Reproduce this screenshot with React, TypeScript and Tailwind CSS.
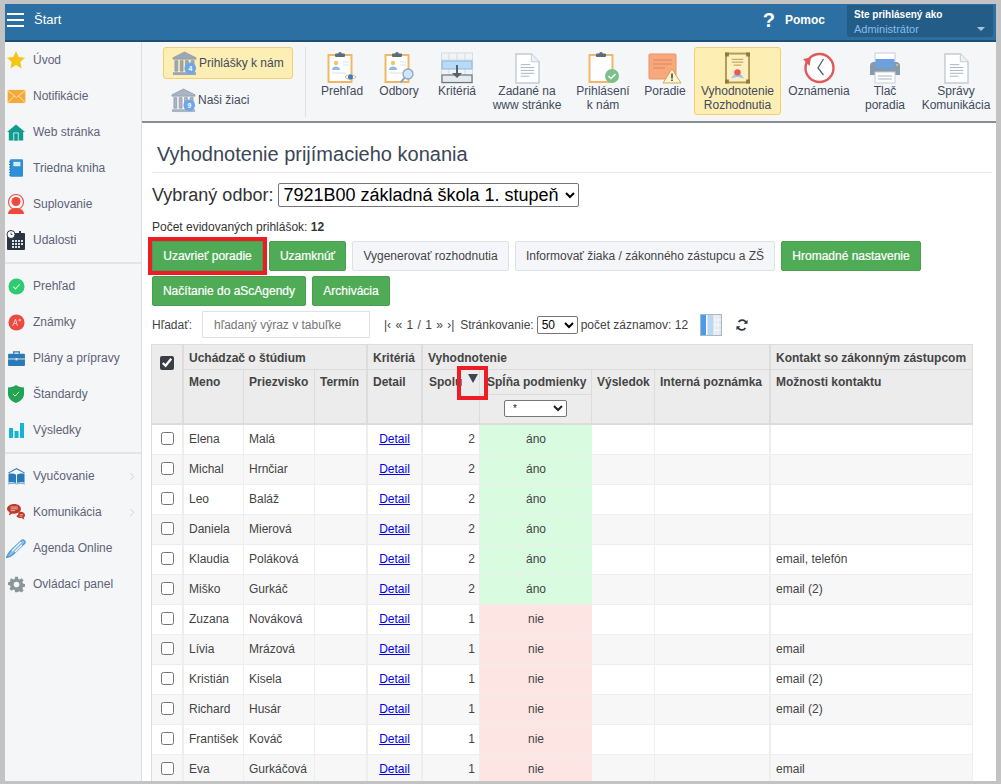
import type { ReactNode } from "react";

const FONT = "[font-family:'Liberation_Sans',Arial,sans-serif]";

type SvgProps = { className?: string };

/* sidebar icons */
function StarIcon() {
  return (
    <svg viewBox="0 0 20 20" className="h-5 w-5">
      <path d="M10 1l2.7 6 6.4.7-4.8 4.3 1.4 6.4L10 15.1l-5.7 3.3 1.4-6.4L.9 7.7 7.3 7z" fill="#f5c518" />
    </svg>
  );
}
function MailIcon() {
  return (
    <svg viewBox="0 0 20 16" className="h-[15px] w-[19px]">
      <rect width="19" height="14" x=".5" y="1" fill="#f6a93b" />
      <path d="M.5 1.5L10 9l9.5-7.5M.5 15l7-7.5M19.5 15l-7-7.5" fill="none" stroke="#fde3b5" strokeWidth="1" />
    </svg>
  );
}
function HouseIcon() {
  return (
    <svg viewBox="0 0 20 18" className="h-[17px] w-[18px]">
      <path d="M10 0l10 8.5h-2V18H2V8.5H0z" fill="#0f9b8e" />
      <rect x="7" y="9" width="6" height="9" fill="#d8f0ed" />
      <rect x="8" y="10" width="4" height="8" fill="#0f9b8e" />
    </svg>
  );
}
function NotebookIcon() {
  return (
    <svg viewBox="0 0 16 20" className="h-[18px] w-[14px]">
      <rect x="1" y="0" width="15" height="20" rx="1.5" fill="#2d8fd5" />
      <rect x="5" y="3" width="8" height="5" fill="#d5ecfb" />
      <path d="M0 3h2M0 6h2M0 9h2M0 12h2M0 15h2M0 18h2" stroke="#1d6ba5" strokeWidth="1" />
    </svg>
  );
}
function PersonIcon() {
  return (
    <svg viewBox="0 0 20 20" className="h-5 w-5">
      <circle cx="10" cy="8" r="7.5" fill="none" stroke="#ee5a4c" strokeWidth="1.2" />
      <circle cx="10" cy="7.5" r="4.5" fill="#ee4b3e" />
      <path d="M2 20c0-4 4-6 8-6s8 2 8 6z" fill="#ee4b3e" />
    </svg>
  );
}
function CalendarIcon() {
  return (
    <svg viewBox="0 0 20 20" className="h-5 w-5">
      <rect x="1" y="3" width="18" height="17" rx="1" fill="#2b3442" />
      <rect x="13" y="1" width="2" height="4" fill="#2b3442" />
      <circle cx="5" cy="4.5" r="4" fill="#fff" stroke="#2b3442" />
      <path d="M5 2.5v2h1.5" stroke="#2b3442" fill="none" strokeWidth=".8" />
      <path d="M6 10h2v2H6zM9 10h2v2H9zM12 10h2v2h-2zM15 10h2v2h-2zM6 13h2v2H6zM9 13h2v2H9zM12 13h2v2h-2zM15 13h2v2h-2zM6 16h2v2H6zM9 16h2v2H9zM12 16h2v2h-2z" fill="#dfe3e8" />
    </svg>
  );
}
function CheckCircleIcon() {
  return (
    <svg viewBox="0 0 18 18" className="h-[17px] w-[17px]">
      <circle cx="9" cy="9" r="8.5" fill="#2ecc71" />
      <path d="M5.5 9.2l2.4 2.4 4.5-5" fill="none" stroke="#d7f7e4" strokeWidth="1.1" />
    </svg>
  );
}
function GradeIcon() {
  return (
    <svg viewBox="0 0 18 18" className="h-[17px] w-[17px]">
      <circle cx="9" cy="9" r="8.5" fill="#ec4a40" />
      <path d="M5 12.5L8 5.5l2 7M6.2 10h3M11 6.5h3M12.5 5v3" fill="none" stroke="#fbd3cf" strokeWidth="1" />
    </svg>
  );
}
function BriefcaseIcon() {
  return (
    <svg viewBox="0 0 18 16" className="h-[15px] w-[17px]">
      <path d="M6 3V1h6v2" fill="none" stroke="#2a7ab8" strokeWidth="1.4" />
      <rect y="3" width="18" height="13" rx="1" fill="#2a7ab8" />
      <path d="M0 8.5h18" stroke="#d9ebf7" strokeWidth="1" />
      <rect x="8" y="7.5" width="2" height="2.5" fill="#d9ebf7" />
    </svg>
  );
}
function ShieldIcon() {
  return (
    <svg viewBox="0 0 16 18" className="h-[18px] w-[16px]">
      <path d="M8 0c2 1.6 4.5 2.4 8 2.5V9c0 4-3.2 7.3-8 9-4.8-1.7-8-5-8-9V2.5C3.500 2.400 6 1.600 8 0z" fill="#23a455" />
      <path d="M4.800 8.800l2.300 2.300 4-4.300" fill="none" stroke="#d6f3e0" strokeWidth="1" />
    </svg>
  );
}
function BarsIcon() {
  return (
    <svg viewBox="0 0 15 15" className="h-[15px] w-[15px]">
      <path d="M0 5h4v10H0zM5.500 8h4v7h-4zM11 0h4v15h-4z" fill="#12b5d6" />
    </svg>
  );
}
function OpenBookIcon() {
  return (
    <svg viewBox="0 0 20 18" className="h-[17px] w-[19px]">
      <path d="M10 0l9 5-1 .6L10 1.400 2 5.600 1 5z" fill="#2a7ab8" />
      <path d="M1.500 6C4 5.500 7.500 5.500 9.500 7v9C7.500 15 4 15 1.500 15.500zM18.500 6C16 5.500 12.500 5.500 10.500 7v9c2-1 5.500-1 8-.5z" fill="#2a7ab8" />
      <path d="M1 17c3-1 6-1 9 0 3-1 6-1 9 0" fill="none" stroke="#5aa5d8" strokeWidth="1" />
    </svg>
  );
}
function ChatIcon() {
  return (
    <svg viewBox="0 0 20 18" className="h-[18px] w-[18px]">
      <path d="M8 0c4.500 0 7.500 2.500 7.500 5.500S12.500 11 8 11c-.8 0-1.500 0-2-.2L2 13l1-3.500C1.200 8.500 0 7 0 5.500 0 2.500 3.500 0 8 0z" fill="#c0392b" />
      <path d="M4 3.500h8M4 5.500h8M4 7.500h5" stroke="#f6d5d1" strokeWidth=".9" />
      <path d="M13 9c4-.8 7 .6 7 3.500 0 1.300-.7 2.200-1.500 2.700l.8 2.300-3-1.800c-2.500.2-5-.5-6-2.200 1.500-.6 2.300-1.700 2.700-4.500z" fill="#c0392b" />
      <path d="M14 12h4M14 13.800h3" stroke="#f6d5d1" strokeWidth=".8" />
    </svg>
  );
}
function PenIcon() {
  return (
    <svg viewBox="0 0 20 20" className="h-5 w-5">
      <path d="M.5 19.500c3-.8 5.500-2 7-3.500L18.500 5.500c1.800-1.800-1-4.800-3-3L5 12.500C3 14.500 1.500 17 .5 19.500z" fill="#8dbfe8" stroke="#4f97d6" strokeWidth="1.300" />
      <path d="M6 13l9-9M9 14l7-7" stroke="#f5f6f8" strokeWidth="1.200" />
    </svg>
  );
}
function GearIcon() {
  return (
    <svg viewBox="0 0 24 24" className="h-[17px] w-[17px]">
      <path
        d="M10 1h4l.6 3.100 2 .8L19.200 3.200l2.800 2.800-1.700 2.600.8 2 3 .6v4l-3 .6-.8 2 1.700 2.600-2.800 2.800-2.600-1.700-2 .8L14 23h-4l-.6-3.100-2-.8-2.600 1.700L2 18l1.700-2.600-.8-2-3-.6v-4l3-.6.8-2L2 6l2.800-2.800 2.600 1.700 2-.8zM12 8a4 4 0 100 8 4 4 0 000-8z"
        fill="#8b9698"
        fillRule="evenodd"
      />
    </svg>
  );
}

/* toolbar icons */
function Clipboard({ children }: { children?: ReactNode }) {
  return (
    <svg viewBox="0 0 34 32" className="h-8 w-[34px]">
      <rect x="3.500" y="3" width="23" height="27" fill="#fff" stroke="#f0b866" strokeWidth="2" />
      <rect x="10" y="1.500" width="10" height="3.500" rx="1" fill="#5d6b7d" />
      <circle cx="15" cy="1.800" r="1.800" fill="#5d6b7d" />
      {children}
    </svg>
  );
}
function PersonLines() {
  return (
    <>
      <circle cx="11" cy="11" r="2.200" fill="#f4c36b" />
      <path d="M7 18c0-2.500 2-3.500 4-3.500s4 1 4 3.500z" fill="#8fbce6" />
      <path d="M18 10h6M18 13h6M7 21h14" stroke="#dbe2ea" strokeWidth="1" />
    </>
  );
}
function DocIcon() {
  return (
    <svg viewBox="0 0 26 32" className="h-[31px] w-[25px]">
      <path d="M1 1h16l8 8v22H1z" fill="#fff" stroke="#c2cbd6" strokeWidth="1.500" />
      <path d="M17 1v8h8" fill="#eef1f4" stroke="#c2cbd6" strokeWidth="1" />
      <path d="M6 12h10M6 15h14M6 18h14M6 21h14M6 24h9" stroke="#a9b3bf" strokeWidth="1" />
    </svg>
  );
}
function KriteriaIcon() {
  return (
    <svg viewBox="0 0 32 32" className="h-8 w-8">
      <rect x=".5" y="1" width="31" height="30" fill="#f1f4f7" stroke="#d5dce3" />
      <path d="M8 1v30M16 1v30M24 1v30M1 8h30" stroke="#d5dce3" strokeWidth="1" />
      <rect x="1" y="9" width="30" height="8" fill="#b8dcf8" stroke="#8fb6d3" />
      <rect x="1" y="23" width="30" height="7.500" fill="#e6eaee" stroke="#69747f" strokeWidth="1.200" />
      <path d="M16 13v12" stroke="#56616c" strokeWidth="2" />
      <path d="M11 21h10l-5 5z" fill="#56616c" />
    </svg>
  );
}
function PoradieIcon() {
  return (
    <svg viewBox="0 0 34 32" className="h-8 w-[34px]">
      <rect x="1" y="2" width="27" height="25" rx="1" fill="#f7a97d" stroke="#e59466" />
      <path d="M5 8h19M5 12h19M5 16h12" stroke="#d98458" strokeWidth="1" />
      <path d="M24 17l9 14H15z" fill="#fdf3cf" stroke="#c9ad5a" />
      <path d="M24 21.500v5M24 27.500v1.500" stroke="#333" strokeWidth="1.400" />
    </svg>
  );
}
function CertIcon() {
  return (
    <svg viewBox="0 0 26 32" className="h-8 w-[25px]">
      <rect x="1" y="1" width="24" height="30" fill="#fdf0c0" stroke="#b59a55" strokeWidth="2" />
      <path d="M0 0h4v4H0zM22 0h4v4h-4zM0 28h4v4H0zM22 28h4v4h-4z" fill="#8f7a3f" />
      <path d="M7 7h12M7 10h12M9 13h8" stroke="#c9ab5d" strokeWidth="1.300" />
      <path d="M6 27l5-6h4l5 6-7-2z" fill="#9cc4ec" />
      <circle cx="13" cy="20.500" r="3.300" fill="#ea5a55" />
    </svg>
  );
}
function ClockIcon() {
  return (
    <svg viewBox="0 0 32 32" className="h-8 w-8">
      <circle cx="16.500" cy="16" r="14" fill="#fff" stroke="#e1595a" strokeWidth="2.400" />
      <path d="M20.500 7l-5.500 9 5.500 7" fill="none" stroke="#56616c" strokeWidth="1.300" />
      <path d="M0 7l8-1.500L6.500 14z" fill="#e1595a" />
    </svg>
  );
}
function PrinterIcon() {
  return (
    <svg viewBox="0 0 32 32" className="h-8 w-8">
      <rect x="6" y="1" width="20" height="10" fill="#fff" stroke="#c5ced7" />
      <path d="M1 14c0-2 1-4 4-4h22c3 0 4 2 4 4v9H1z" fill="#8799ab" />
      <rect x="6.500" y="7" width="19" height="9" fill="#6ba1df" />
      <rect x="6" y="20" width="20" height="11" fill="#fff" stroke="#c5ced7" />
      <path d="M9 24h14M9 27h14" stroke="#a9b3bf" strokeWidth="1" />
      <circle cx="28" cy="13" r="1" fill="#f3c969" />
    </svg>
  );
}
function BankIcon({ count, dim }: { count: string; dim?: boolean }) {
  const c = dim ? "#aab5c4" : "#9aa7b8";
  return (
    <svg viewBox="0 0 26 26" className="h-[25px] w-[25px]">
      <path d="M13 1l12 6v1.500H1V7z" fill={c} stroke="#7f8da0" strokeWidth=".6" />
      <path d="M3 10h3v11H3zM8.500 10h3v11h-3zM14 10h3v11h-3zM20 10h3v11h-3z" fill={c} stroke="#7f8da0" strokeWidth=".6" />
      <rect x="1" y="22" width="24" height="3" fill={c} />
      <circle cx="19" cy="18" r="6" fill="#6ea6e8" />
      <text x="19" y="20.500" textAnchor="middle" fontSize="7" fontWeight="700" fill="#fff" fontFamily="Liberation Sans">
        {count}
      </text>
    </svg>
  );
}
function ColumnsIcon({ className }: SvgProps) {
  return (
    <svg viewBox="0 0 22 22" className={className}>
      <rect x=".5" y=".5" width="21" height="21" fill="#dfe6ee" stroke="#a9b8c8" />
      <rect x="1" y="1" width="5" height="20" fill="#4b9be8" />
      <rect x="6" y="1" width="1" height="20" fill="#fff" />
      <rect x="8" y="1" width="5" height="20" fill="#b8d8f5" />
      <path d="M15 1v20M18 1v20M14 6h7M14 11h7M14 16h7" stroke="#fff" strokeWidth=".8" />
    </svg>
  );
}
function RefreshIcon() {
  return (
    <svg viewBox="0 0 14 14" className="h-3 w-3">
      <path d="M12 5A5 5 0 003 3.500M2 9a5 5 0 009 1.500" fill="none" stroke="#33383f" strokeWidth="2" />
      <path d="M9 5.500h4.500V1zM5 8.500H.5V13z" fill="#33383f" />
    </svg>
  );
}

const sideGroups: { icon: ReactNode; label: string; more?: boolean }[][] = [
  [
    { icon: <StarIcon />, label: "Úvod" },
    { icon: <MailIcon />, label: "Notifikácie" },
    { icon: <HouseIcon />, label: "Web stránka" },
    { icon: <NotebookIcon />, label: "Triedna kniha" },
    { icon: <PersonIcon />, label: "Suplovanie" },
    { icon: <CalendarIcon />, label: "Udalosti" },
  ],
  [
    { icon: <CheckCircleIcon />, label: "Prehľad" },
    { icon: <GradeIcon />, label: "Známky" },
    { icon: <BriefcaseIcon />, label: "Plány a prípravy" },
    { icon: <ShieldIcon />, label: "Štandardy" },
    { icon: <BarsIcon />, label: "Výsledky" },
  ],
  [
    { icon: <OpenBookIcon />, label: "Vyučovanie", more: true },
    { icon: <ChatIcon />, label: "Komunikácia", more: true },
    { icon: <PenIcon />, label: "Agenda Online" },
    { icon: <GearIcon />, label: "Ovládací panel" },
  ],
];

function Sidebar() {
  return (
    <aside className="flex w-[137px] shrink-0 flex-col border-r border-[#dcdfe3] bg-[#f5f6f8]">
      {sideGroups.map((group, i) => (
        <div key={i} className={i > 0 ? "mt-1 border-t-2 border-[#e2e4e7] pt-1" : ""}>
          {group.map((item) => (
            <div key={item.label} className="flex h-9 items-center text-xs text-[#5e6277]">
              <span className="mr-[6px] flex w-[22px] shrink-0 justify-center">{item.icon}</span>
              <span>{item.label}</span>
              {item.more && (
                <svg viewBox="0 0 6 10" className="ml-auto mr-[6px] h-[9px] w-[6px]">
                  <path d="M1 1l4 4-4 4" fill="none" stroke="#c6cbd0" strokeWidth="1" />
                </svg>
              )}
            </div>
          ))}
        </div>
      ))}
    </aside>
  );
}

function ToolItem({ icon, lines, w, active }: { icon: ReactNode; lines: string[]; w: string; active?: boolean }) {
  return (
    <div
      className={`flex h-[68px] shrink-0 flex-col items-center rounded-[3px] border pt-1 text-center text-xs leading-[14px] text-[#434a5c] ${w} ${
        active ? "border-[#f5cf6b] bg-[#fdeeb3]" : "border-transparent"
      }`}
    >
      <span className="flex h-8 items-center">{icon}</span>
      <span>
        {lines.map((l) => (
          <span key={l} className="block whitespace-nowrap">
            {l}
          </span>
        ))}
      </span>
    </div>
  );
}

function Toolbar() {
  return (
    <div className="flex h-[81px] shrink-0 items-start border-b-2 border-[#8a8d92] bg-[#f5f6f8] pt-[5px]">
      <div className="ml-[21px] flex w-[130px] shrink-0 flex-col gap-[5px]">
        <div className="flex h-[32px] items-center gap-[2px] rounded-[3px] border border-[#f5cf6b] bg-[#fdeeb3] pl-2 text-xs text-[#434a5c]">
          <BankIcon count="4" />
          <span className="whitespace-nowrap">Prihlášky k nám</span>
        </div>
        <div className="flex h-[32px] items-center gap-[2px] pl-2 text-xs text-[#434a5c]">
          <BankIcon count="9" dim />
          <span>Naši žiaci</span>
        </div>
      </div>
      <div className="ml-3 mr-[7px] h-[70px] w-px shrink-0 bg-[#dfe2e6]" />
      <ToolItem w="w-[58px]" lines={["Prehľad"]} icon={<Clipboard><PersonLines /><path d="M20 25c2-3 8-3 11 0-3 3-9 3-11 0z" fill="#fff" stroke="#c9b98a" /><circle cx="25.500" cy="25" r="2.500" fill="#3b7bbf" /></Clipboard>} />
      <ToolItem w="w-[56px]" lines={["Odbory"]} icon={<Clipboard><PersonLines /><circle cx="26" cy="22" r="5" fill="#cfe6fa" stroke="#8da5bd" strokeWidth="1.300" /><path d="M22.500 26l-4 4.500" stroke="#8da5bd" strokeWidth="2" /></Clipboard>} />
      <ToolItem w="w-[60px]" lines={["Kritériá"]} icon={<KriteriaIcon />} />
      <ToolItem w="w-[80px]" lines={["Zadané na", "www stránke"]} icon={<DocIcon />} />
      <ToolItem w="w-[72px]" lines={["Prihlásení", "k nám"]} icon={<Clipboard><circle cx="26" cy="24" r="7" fill="#7cc08a" /><path d="M22.500 24l2.500 2.500 4.500-4.500" fill="none" stroke="#fff" strokeWidth="1.500" /></Clipboard>} />
      <ToolItem w="w-[52px]" lines={["Poradie"]} icon={<PoradieIcon />} />
      <div className="w-[3px] shrink-0" />
      <ToolItem w="w-[87px]" active lines={["Vyhodnotenie", "Rozhodnutia"]} icon={<CertIcon />} />
      <ToolItem w="w-[76px]" lines={["Oznámenia"]} icon={<ClockIcon />} />
      <ToolItem w="w-[56px]" lines={["Tlač", "poradia"]} icon={<PrinterIcon />} />
      <ToolItem w="w-[83px] pl-[3px]" lines={["Správy", "Komunikácia"]} icon={<DocIcon />} />
    </div>
  );
}

function Btn({ children, green, className = "" }: { children: ReactNode; green?: boolean; className?: string }) {
  return (
    <button
      type="button"
      className={`h-[30px] whitespace-nowrap border px-0 text-xs ${
        green
          ? "border-[#4a9e50] bg-[#4fab55] text-white [-webkit-text-stroke:0.2px_white]"
          : "border-[#dfe1e6] bg-[#f5f6fa] text-[#444]"
      } ${className}`}
    >
      {children}
    </button>
  );
}

const rows: [string, string, number, string][] = [
  ["Elena", "Malá", 2, ""],
  ["Michal", "Hrnčiar", 2, ""],
  ["Leo", "Baláž", 2, ""],
  ["Daniela", "Mierová", 2, ""],
  ["Klaudia", "Poláková", 2, "email, telefón"],
  ["Miško", "Gurkáč", 2, "email (2)"],
  ["Zuzana", "Nováková", 1, ""],
  ["Lívia", "Mrázová", 1, "email"],
  ["Kristián", "Kisela", 1, "email (2)"],
  ["Richard", "Husár", 1, "email (2)"],
  ["František", "Kováč", 1, ""],
  ["Eva", "Gurkáčová", 1, "email"],
];

const th = "border-b border-r border-[#dcdcdc] bg-[#ececec] px-[5px] align-top text-xs font-bold text-[#444]";
const td = "h-[30px] border-b border-r border-[#eeeeee] px-[5px] pb-[2px] text-xs text-[#444]";

function ResultsTable() {
  return (
    <table className="ml-[-1px] w-[822px] table-fixed border-separate border-spacing-0 border-l border-t border-[#dcdcdc] text-left">
      <colgroup>
        <col className="w-[32px]" />
        <col className="w-[60px]" />
        <col className="w-[71px]" />
        <col className="w-[53px]" />
        <col className="w-[55px]" />
        <col className="w-[57px]" />
        <col className="w-[112px]" />
        <col className="w-[63px]" />
        <col className="w-[116px]" />
        <col className="w-[202px]" />
      </colgroup>
      <thead>
        <tr className="h-[25px]">
          <th rowSpan={3} className={`${th} border-b-2 border-r-2 px-0 pt-[11px]`}>
            <input type="checkbox" defaultChecked readOnly className="mx-auto block h-[14px] w-[14px] accent-[#3a3d46]" />
          </th>
          <th colSpan={3} className={`${th} border-r-2 pt-[5px]`}>Uchádzač o štúdium</th>
          <th className={`${th} border-r-2 pt-[5px]`}>Kritériá</th>
          <th colSpan={4} className={`${th} border-r-2 pt-[5px]`}>Vyhodnotenie</th>
          <th className={`${th} whitespace-nowrap pt-[5px]`}>Kontakt so zákonným zástupcom</th>
        </tr>
        <tr className="h-[25px]">
          <th rowSpan={2} className={`${th} border-b-2 pt-[4px]`}>Meno</th>
          <th rowSpan={2} className={`${th} border-b-2 pt-[4px]`}>Priezvisko</th>
          <th rowSpan={2} className={`${th} border-b-2 border-r-2 pt-[4px]`}>Termín</th>
          <th rowSpan={2} className={`${th} border-b-2 border-r-2 pt-[4px]`}>Detail</th>
          <th rowSpan={2} className={`${th} relative border-b-2 pt-[4px] pl-[6px]`}>
            Spolu
            <span className="absolute left-[34px] top-[-4px] flex h-[34px] w-[31px] justify-center border-4 border-[#ee1c25] pt-[4px]">
              <svg viewBox="0 0 10 9" className="h-[9px] w-[10px]">
                <path d="M0 0h10L5 9z" fill="#3d4650" />
              </svg>
            </span>
          </th>
          <th className={`${th} whitespace-nowrap pt-[4px] pl-[7px]`}>Spĺňa podmienky</th>
          <th rowSpan={2} className={`${th} border-b-2 pt-[4px]`}>Výsledok</th>
          <th rowSpan={2} className={`${th} border-b-2 border-r-2 pt-[4px]`}>Interná poznámka</th>
          <th rowSpan={2} className={`${th} border-b-2 pt-[4px]`}>Možnosti kontaktu</th>
        </tr>
        <tr className="h-[30px]">
          <th className={`${th} border-b-2 pt-[5px] text-center`}>
            <select className="h-[17px] w-[63px] rounded-[2px] border border-[#767676] bg-white pl-1 text-[10px] font-normal text-[#222]">
              <option>*</option>
            </select>
          </th>
        </tr>
      </thead>
      <tbody>
        {rows.map(([first, last, sum, contact], i) => {
          const ok = sum === 2;
          const bg = i % 2 ? "bg-[#f7f7f7]" : "bg-white";
          return (
            <tr key={first} className={bg}>
              <td className={`${td} border-r-2 px-0`}>
                <input type="checkbox" className="mx-auto block h-[13px] w-[13px]" />
              </td>
              <td className={`${td} whitespace-nowrap`}>{first}</td>
              <td className={td}>{last}</td>
              <td className={`${td} border-r-2`} />
              <td className={`${td} border-r-2 text-center`}>
                <a href="#" className="text-[#0000ee] underline">Detail</a>
              </td>
              <td className={`${td} pr-[4px] text-right`}>{sum}</td>
              <td className={`${td} border-r-0 text-center ${ok ? "bg-[#d9fbdf]" : "bg-[#fde5e3]"}`}>{ok ? "áno" : "nie"}</td>
              <td className={td} />
              <td className={`${td} border-r-2`} />
              <td className={td}>{contact}</td>
            </tr>
          );
        })}
      </tbody>
    </table>
  );
}

export default function App() {
  return (
    <div className={`h-[784px] w-[1001px] overflow-hidden bg-[#c3c3c3] pb-[3px] pl-[5px] pr-[5px] pt-1 ${FONT}`}>
      <div className="flex h-full flex-col overflow-hidden bg-white">
        <header className="flex h-[38px] shrink-0 items-start border-b-2 border-[#1f4f75] bg-[#2c6fa3] text-white">
          <div className="ml-[2px] mt-[9px] flex w-[17px] flex-col gap-[4px]">
            <span className="h-[2px] bg-white" />
            <span className="h-[2px] bg-white" />
            <span className="h-[2px] bg-white" />
          </div>
          <span className="ml-[10px] mt-[7px] text-[13px] leading-[18px]">Štart</span>
          <span className="ml-auto mt-[4px] text-[20px] font-bold leading-[24px]">?</span>
          <span className="ml-[10px] mt-[7px] text-xs font-bold leading-[18px]">Pomoc</span>
          <div className="relative ml-[22px] mr-[3px] mt-px h-[32px] w-[146px] rounded-b-[3px] bg-[#235c86] pl-[7px] pt-[3px]">
            <div className="text-[10px] font-bold leading-[13px]">Ste prihlásený ako</div>
            <div className="mt-[1px] text-[11px] leading-[14px] text-[#86bdf0]">Administrátor</div>
            <span className="absolute bottom-[6px] right-[8px] h-0 w-0 border-x-[4px] border-t-[4px] border-x-transparent border-t-[#a9c3d8]" />
          </div>
        </header>
        <div className="flex min-h-0 flex-1">
          <Sidebar />
          <div className="flex min-w-0 flex-1 flex-col">
            <Toolbar />
            <main className="min-h-0 flex-1 pl-[10px]">
              <div className="mr-1 mt-[5px] border-b border-[#e6e8ea] pb-[3px] pl-[5px] pt-[12px] text-xl leading-[29px] text-[#3b4656]">
                Vyhodnotenie prijímacieho konania
              </div>
              <div className="mt-[10px] flex h-6 items-center gap-[5px] text-lg text-[#333]">
                <span>Vybraný odbor:</span>
                <select className="h-6 w-[301px] rounded-[2px] border border-[#767676] bg-white text-lg leading-none text-black">
                  <option>7921B00 základná škola 1. stupeň</option>
                </select>
              </div>
              <div className="mt-[13px] text-xs leading-[15px] text-[#333]">
                Počet evidovaných prihlášok: <b>12</b>
              </div>
              <div className="mt-[6px] flex gap-[6px]">
                <Btn green className="w-[111px] outline-4 outline-[#ee1c25]">Uzavrieť poradie</Btn>
                <Btn green className="w-[77px] rounded-[2px]">Uzamknúť</Btn>
                <Btn className="w-[157px] rounded-[2px]">Vygenerovať rozhodnutia</Btn>
                <Btn className="w-[260px] rounded-[2px]">Informovať žiaka / zákonného zástupcu a ZŠ</Btn>
                <Btn green className="w-[140px] rounded-[2px]">Hromadné nastavenie</Btn>
              </div>
              <div className="mt-[5px] flex gap-[6px]">
                <Btn green className="w-[154px] rounded-[2px]">Načítanie do aScAgendy</Btn>
                <Btn green className="w-[78px] rounded-[2px]">Archivácia</Btn>
              </div>
              <div className="mt-[5px] flex h-[27px] items-center text-xs text-[#444]">
                <span className="w-[50px]">Hľadať:</span>
                <input
                  placeholder="hľadaný výraz v tabuľke"
                  className="h-[27px] w-[168px] border border-[#dfe1e3] bg-white pl-[11px] text-xs placeholder:text-[#757575]"
                />
                <span className="ml-[14px] whitespace-nowrap [word-spacing:1px]">|‹ « 1 / 1 » ›|</span>
                <span className="ml-[6px]">Stránkovanie:</span>
                <select className="ml-[3px] h-[18px] w-[41px] rounded-[2px] border border-[#767676] bg-white text-xs text-black">
                  <option>50</option>
                </select>
                <span className="ml-[3px]">počet záznamov: 12</span>
                <ColumnsIcon className="ml-[12px] h-[22px] w-[22px]" />
                <span className="ml-[14px]"><RefreshIcon /></span>
              </div>
              <div className="mt-[6px]">
                <ResultsTable />
              </div>
            </main>
          </div>
        </div>
      </div>
    </div>
  );
}
